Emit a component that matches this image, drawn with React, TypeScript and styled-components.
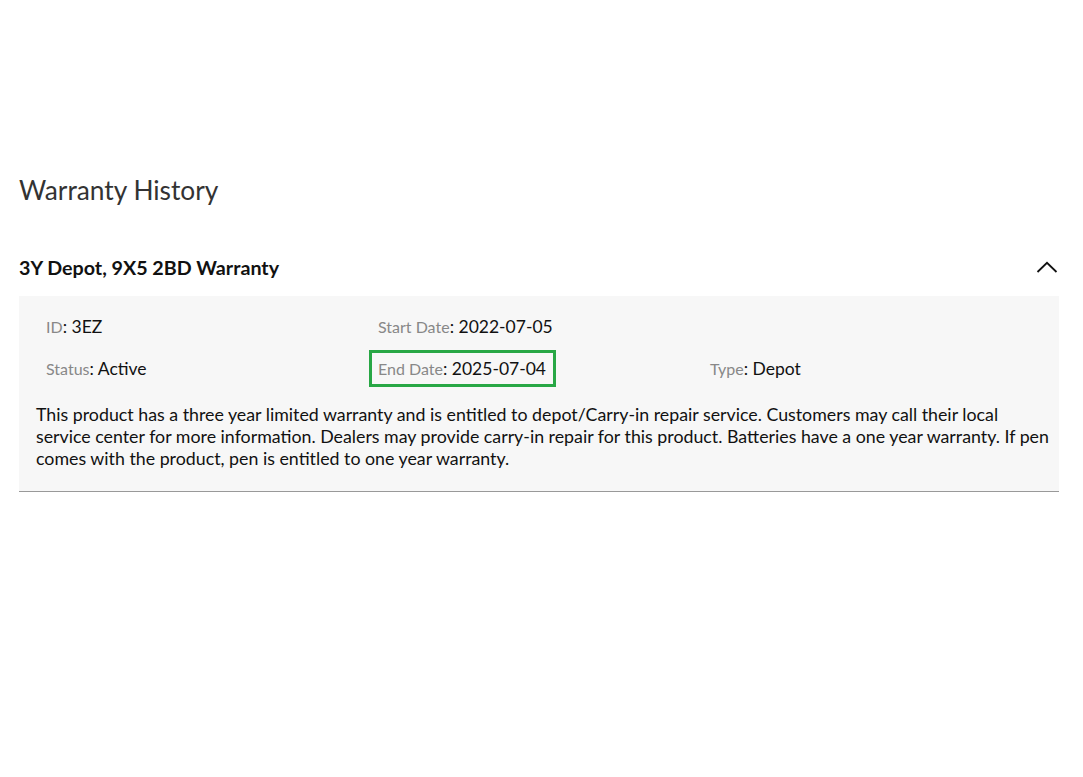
import React from "react";
import styled, { createGlobalStyle } from "styled-components";

const GlobalStyle = createGlobalStyle`
  body {
    margin: 0;
    background: #fff;
    font-family: Lato, "Open Sans", sans-serif;
    color: #111;
  }
`;

type Field = { label: string; value: string; highlight?: boolean };

const fields: (Field | null)[] = [
  { label: "ID", value: "3EZ" },
  { label: "Start Date", value: "2022-07-05" },
  null,
  { label: "Status", value: "Active" },
  { label: "End Date", value: "2025-07-04", highlight: true },
  { label: "Type", value: "Depot" },
];

const App = () => (
  <>
    <GlobalStyle />
    <Page>
      <Title>Warranty History</Title>
      <AccordionHeader>
        <HeaderTitle>3Y Depot, 9X5 2BD Warranty</HeaderTitle>
        <svg width="22" height="12" viewBox="0 0 22 12" fill="none">
          <path d="M1.5 11 L11 1.8 L20.5 11" stroke="#111" strokeWidth="1.8" />
        </svg>
      </AccordionHeader>
      <Panel>
        <FieldGrid>
          {fields.map((f, i) =>
            f ? (
              <FieldCell key={i}>
                <FieldItem $highlight={f.highlight}>
                  <Label>{f.label}</Label>: <Value>{f.value}</Value>
                </FieldItem>
              </FieldCell>
            ) : (
              <FieldCell key={i} />
            )
          )}
        </FieldGrid>
        <Description>
          This product has a three year limited warranty and is entitled to depot/Carry-in repair
          service. Customers may call their local service center for more information. Dealers may
          provide carry-in repair for this product. Batteries have a one year warranty. If pen comes
          with the product, pen is entitled to one year warranty.
        </Description>
      </Panel>
    </Page>
  </>
);

export default App;

const Page = styled.div`
  padding: 175px 24px 0 19px;
`;

const Title = styled.h1`
  margin: 0;
  font-size: 26.3px;
  line-height: 30px;
  font-weight: 400;
  color: #333;
`;

const AccordionHeader = styled.div`
  margin-top: 34px;
  height: 57px;
  display: flex;
  align-items: center;
  justify-content: space-between;
  padding-right: 1px;
  svg {
    margin-bottom: 2px;
  }
`;

const HeaderTitle = styled.h2`
  margin: 0;
  font-size: 19.7px;
  font-weight: 700;
  color: #111;
  line-height: 24px;
`;

const Panel = styled.div`
  background: #f7f7f7;
  border-bottom: 1px solid #999;
  padding: 18px 8px 22px 17px;
`;

const FieldGrid = styled.div`
  display: grid;
  grid-template-columns: repeat(3, 332px);
  row-gap: 18px;
  padding-left: 10px;
`;

const FieldCell = styled.div`
  height: 24px;
  display: flex;
  align-items: center;
  font-size: 17.5px;
  color: #111;
`;

const FieldItem = styled.span<{ $highlight?: boolean }>`
  white-space: nowrap;
  ${({ $highlight }) =>
    $highlight &&
    `
    padding: 5px 7px 5px 6px;
    margin: -8px 0 -8px -9px;
    border: 3px solid #28a745;
  `}
`;

const Label = styled.span`
  font-size: 16px;
  color: #888;
`;

const Value = styled.span`
  font-size: 17.5px;
  color: #111;
`;

const Description = styled.p`
  margin: 23px 0 0 0;
  font-size: 17.8px;
  line-height: 22px;
  color: #111;
`;
